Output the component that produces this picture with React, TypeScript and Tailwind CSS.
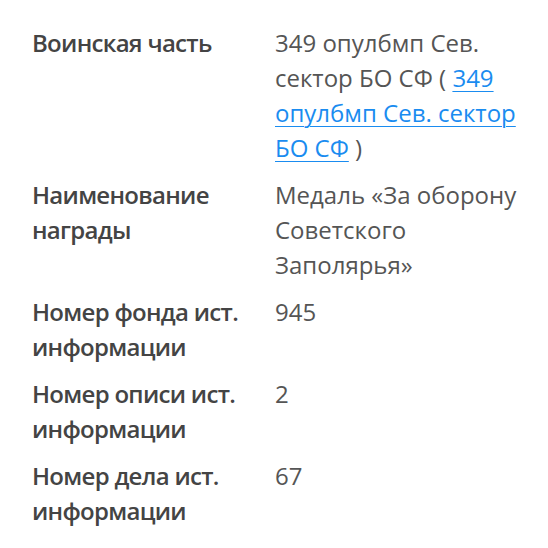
import React from 'react';

type Row = { label: string; value: React.ReactNode };

const rows: Row[] = [
  {
    label: 'Воинская часть',
    value: (
      <>
        349 опулбмп Сев. сектор БО СФ ({' '}
        <a href="#" className="text-[#1a8cf0] underline underline-offset-4 decoration-1">
          349 опулбмп Сев. сектор БО СФ
        </a>{' '}
        )
      </>
    ),
  },
  { label: 'Наименование награды', value: 'Медаль «За оборону Советского Заполярья»' },
  { label: 'Номер фонда ист. информации', value: '945' },
  { label: 'Номер описи ист. информации', value: '2' },
  { label: 'Номер дела ист. информации', value: '67' },
];

const App: React.FC = () => {
  return (
    <div className="min-h-[548px] bg-white pl-8 pr-6 pt-[25px] font-['Open_Sans','Noto_Sans',sans-serif] text-[24px] leading-[35px]">
      <div className="flex flex-col gap-3">
        {rows.map((row) => (
          <div key={row.label} className="grid grid-cols-[243px_1fr]">
            <div className="pr-3 font-[650] tracking-[-0.7px] text-[#444444]">{row.label}</div>
            <div className="text-[#555555]">{row.value}</div>
          </div>
        ))}
      </div>
    </div>
  );
};

export default App;
